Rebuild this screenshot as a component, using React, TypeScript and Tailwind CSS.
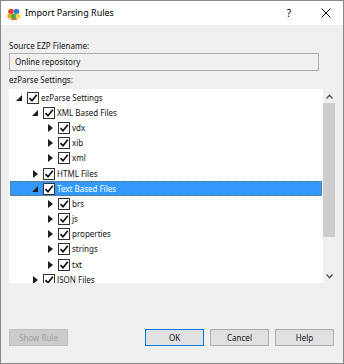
import React from "react";

type Node = { level: number; text: string; open: boolean; selected?: boolean };

const nodes: Node[] = [
  { level: 0, text: "ezParse Settings", open: true },
  { level: 1, text: "XML Based Files", open: true },
  { level: 2, text: "vdx", open: false },
  { level: 2, text: "xib", open: false },
  { level: 2, text: "xml", open: false },
  { level: 1, text: "HTML Files", open: false },
  { level: 1, text: "Text Based Files", open: true, selected: true },
  { level: 2, text: "brs", open: false },
  { level: 2, text: "js", open: false },
  { level: 2, text: "properties", open: false },
  { level: 2, text: "strings", open: false },
  { level: 2, text: "txt", open: false },
  { level: 1, text: "JSON Files", open: false },
];

const indent = ["pl-[4px]", "pl-[20px]", "pl-[35px]"];

function Expander({ open }: { open: boolean }) {
  return (
    <span className="w-[8px] h-[8px] flex items-center justify-center">
      {open ? (
        <svg width="6" height="6" viewBox="0 0 6 6">
          <polygon points="6,0 6,6 0,6" fill="#1e1e1e" />
        </svg>
      ) : (
        <svg width="5" height="8" viewBox="0 0 5 8">
          <polygon points="0,0 5,4 0,8" fill="#1e1e1e" />
        </svg>
      )}
    </span>
  );
}

function Check() {
  return (
    <span className="ml-[4px] w-[12px] h-[12px] border border-[#333] bg-white flex items-center justify-center shrink-0">
      <svg width="10" height="10" viewBox="0 0 10 10">
        <path d="M1.5 5.2 L4 7.8 L8.8 1.8" fill="none" stroke="#111" strokeWidth="1.7" />
      </svg>
    </span>
  );
}

function AppIcon() {
  return (
    <svg width="14" height="12" viewBox="0 0 14 12">
      <circle cx="4" cy="3.5" r="2.8" fill="#e8412c" />
      <circle cx="9.5" cy="3.5" r="2.8" fill="#2f7fd8" />
      <circle cx="3" cy="8" r="2.6" fill="#f2a31b" />
      <circle cx="7" cy="8.5" r="2.8" fill="#3fae49" />
      <circle cx="11" cy="8" r="2.5" fill="#f6d23a" />
      <rect x="4" y="10.5" width="6" height="1.5" fill="#e86a2c" />
    </svg>
  );
}

function Btn({ label, kind }: { label: string; kind: "disabled" | "default" | "normal" }) {
  const cls =
    kind === "disabled"
      ? "bg-[#cccccc] border-[#bfbfbf] text-[#a0a0a0]"
      : kind === "default"
      ? "bg-[#e1e1e1] border-[#0078d7] text-[#111]"
      : "bg-[#e1e1e1] border-[#adadad] text-[#111]";
  return (
    <div className={`w-[59px] h-[17px] border flex items-center justify-center ${cls}`}>{label}</div>
  );
}

export default function App() {
  return (
    <div className="w-[344px] h-[364px] border border-[#888] bg-[#f0f0f0] flex flex-col font-['Noto_Sans','Liberation_Sans',sans-serif] text-[8px] text-[#111] overflow-hidden">
      <div className="h-[24px] bg-white flex items-center shrink-0">
        <div className="ml-[6px] mt-[1px]">
          <AppIcon />
        </div>
        <div className="ml-[4px] text-[9px] text-black">Import Parsing Rules</div>
        <div className="ml-auto text-[10px] text-black mr-[30px]">?</div>
        <svg width="10" height="10" viewBox="0 0 10 10" className="mr-[12px]">
          <path d="M0.5 0.5 L9.5 9.5 M9.5 0.5 L0.5 9.5" stroke="#000" strokeWidth="1" />
        </svg>
      </div>

      <div className="flex flex-col px-[8px]">
        <div className="mt-[15px] h-[12px] leading-[12px]">Source EZP Filename:</div>
        <div className="mt-[1px] w-[310px] h-[18px] border border-[#adadad] bg-[#f0f0f0] flex items-center pl-[5px]">
          Online repository
        </div>
        <div className="mt-[3px] h-[12px] leading-[12px]">ezParse Settings:</div>

        <div className="mt-[3px] w-[326px] h-[194px] bg-white flex overflow-hidden">
          <div className="flex-1 pl-[1px] pt-[1px] flex flex-col">
            {nodes.map((n, i) => (
              <div
                key={i}
                className={`h-[15.2px] shrink-0 flex items-center ${indent[n.level]} ${
                  n.selected ? "bg-[#3399ff] text-white border border-dotted border-[#6a6a6a]" : "border border-transparent"
                }`}
              >
                <Expander open={n.open} />
                <Check />
                <span className="ml-[2px] whitespace-nowrap">{n.text}</span>
              </div>
            ))}
          </div>
          <div className="w-[12px] ml-[1px] bg-[#f0f0f0] flex flex-col items-center">
            <div className="h-[14px] flex items-center justify-center">
              <svg width="7" height="5" viewBox="0 0 7 5">
                <path d="M0.5 4.5 L3.5 1.2 L6.5 4.5" fill="none" stroke="#505050" strokeWidth="1.3" />
              </svg>
            </div>
            <div className="w-full h-[134px] bg-[#cdcdcd]" />
            <div className="flex-1" />
            <div className="h-[14px] flex items-center justify-center">
              <svg width="7" height="5" viewBox="0 0 7 5">
                <path d="M0.5 0.5 L3.5 3.8 L6.5 0.5" fill="none" stroke="#505050" strokeWidth="1.3" />
              </svg>
            </div>
          </div>
        </div>

        <div className="mt-[46px] flex items-center">
          <Btn label="Show Rule" kind="disabled" />
          <div className="ml-auto flex gap-[6px] mr-[1px]">
            <Btn label="OK" kind="default" />
            <Btn label="Cancel" kind="normal" />
            <Btn label="Help" kind="normal" />
          </div>
        </div>
      </div>
    </div>
  );
}
